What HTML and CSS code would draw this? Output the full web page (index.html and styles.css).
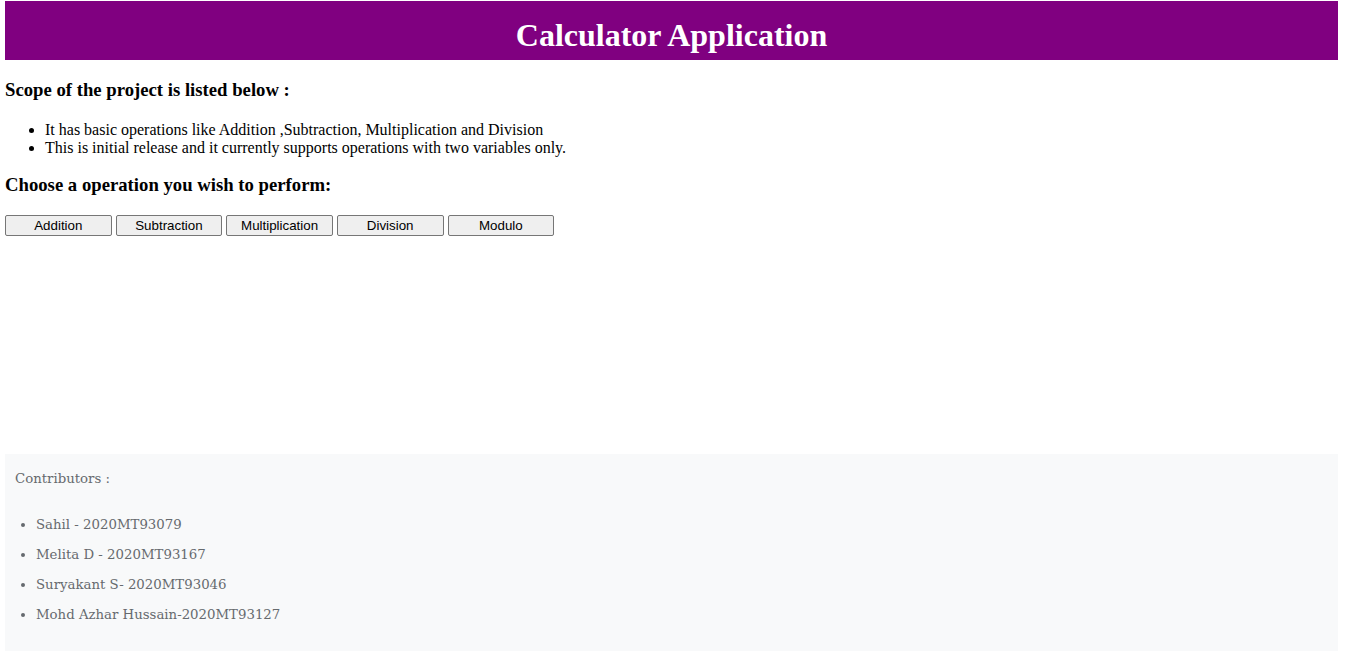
FILE: index.html
```html
<!DOCTYPE html>
<html lang="en">
<head>
<meta charset="utf-8">
<title>Calculator Application</title>
<link rel="stylesheet" href="styles.css">
</head>
<body>
<h1 class="title">Calculator Application</h1>
<h3 class="section-title">Scope of the project is listed below :</h3>
<ul class="scope-list">
  <li>It has basic operations like Addition ,Subtraction, Multiplication and Division</li>
  <li>This is initial release and it currently supports operations with two variables only.</li>
</ul>
<h3 class="section-title choose-title">Choose a operation you wish to perform:</h3>
<div class="ops">
  <button class="op-btn">Addition</button>
  <button class="op-btn">Subtraction</button>
  <button class="op-btn">Multiplication</button>
  <button class="op-btn">Division</button>
  <button class="op-btn">Modulo</button>
</div>
<footer class="footer">
  <p class="footer-title">Contributors :</p>
  <ul class="contributors">
    <li>Sahil - 2020MT93079</li>
    <li>Melita D - 2020MT93167</li>
    <li>Suryakant S- 2020MT93046</li>
    <li>Mohd Azhar Hussain-2020MT93127</li>
  </ul>
</footer>
</body>
</html>
```

FILE: styles.css
```css
html {
  height: 651px;
  overflow: hidden;
}
body {
  margin: 0 10px 0 5px;
  padding-top: 1px;
  font-family: "Liberation Serif", "Times New Roman", serif;
  font-size: 16px;
  color: #000;
  background: #fff;
}
.title {
  margin: 0;
  background: #800080;
  color: #fff;
  text-align: center;
  font-size: 32px;
  font-weight: bold;
  height: 59px;
  box-sizing: border-box;
  padding-top: 16px;
  line-height: 36px;
}
.section-title {
  font-size: 1.17em;
  margin: 1em 0;
}
.scope-list {
  margin: 20.72px 0 1em;
  padding-left: 40px;
  line-height: 18px;
}
.choose-title {
  margin-top: 16.72px;
}
.ops {
  padding-top: 0;
}
.op-btn {
  width: 8%;
  font-family: "Liberation Sans", Arial, sans-serif;
  font-size: 13.333px;
  color: #000;
  background: #efefef;
  border: 1px solid #767676;
  border-radius: 2px;
  padding: 2px 6px;
  margin: 0;
}
.footer {
  margin-top: 218px;
  background: #f8f9fa;
  color: #666a6e;
  font-family: "DejaVu Serif", Georgia, serif;
  font-size: 13.3px;
  height: 197px;
  box-sizing: border-box;
  padding: 13px 10px 11px;
  overflow: hidden;
}
.footer-title {
  margin: 0;
  line-height: 24px;
}
.contributors {
  margin: 19px 0 0;
  padding-left: 21px;
}
.contributors li {
  line-height: 30px;
}
```
